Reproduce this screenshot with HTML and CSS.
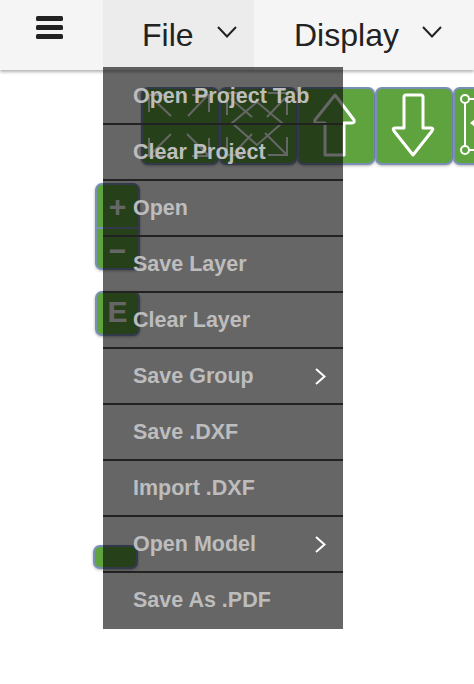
FILE: index.html

```html
<!DOCTYPE html>
<html lang="en">
<head>
  <meta charset="UTF-8" />
  <meta name="viewport" content="width=device-width, initial-scale=1.0" />
  <title>File menu</title>
  <link rel="stylesheet" href="styles.css">
</head>
<body>
  <nav class="topbar">
    <div class="burger">
      <svg width="27" height="23" viewBox="0 0 27 23">
        <rect x="0" y="0" width="27" height="5" rx="1.5" />
        <rect x="0" y="9" width="27" height="5" rx="1.5" />
        <rect x="0" y="18" width="27" height="5" rx="1.5" />
      </svg>
    </div>
    <div class="nav-item nav-file">
      <span>File</span>
      <svg class="caret" width="20" height="12" viewBox="0 0 20 12"><path d="M1 1 L10 10.5 L19 1" /></svg>
    </div>
    <div class="nav-item">
      <span>Display</span>
      <svg class="caret" width="20" height="12" viewBox="0 0 20 12"><path d="M1 1 L10 10.5 L19 1" /></svg>
    </div>
  </nav>

  <!-- floating toolbars, sit on the canvas -->
  <div class="toolbar">
    <button class="tool">
      <svg viewBox="0 0 78 78">
        <path class="thin" d="M8 25 V8 H25 M12 12 L30 29 M68 25 V8 H51 M66 9 L47 29 M8 51 V69 H25 M8 69 L30 47 M68 51 V69 H51 M68 69 L46 47" />
      </svg>
    </button>
    <button class="tool">
      <svg viewBox="0 0 78 78">
        <path class="thin" d="M8 28 V6 H25 M68 28 V6 H49 M8 50 V68 H24 M68 50 V68 H49 M12 12 L33 30 M48 30 L66 11 M16 65 L33 47 M46 46 L68 68 M13 36 L38 15 L63 36 L38 58 Z" />
      </svg>
    </button>
    <button class="tool">
      <svg viewBox="0 0 78 78"><path class="thick" d="M38 8 L18 33 Q17 36 20 36 H28 V68 H47 V36 H55 Q58 36 57 33 Z" /></svg>
    </button>
    <button class="tool">
      <svg viewBox="0 0 78 78"><path class="thick" d="M31 8 H46 Q48 8 48 10 V41 H56 Q59 41 57 44 L38 68 L19 44 Q17 41 20 41 H29 V10 Q29 8 31 8 Z" /></svg>
    </button>
    <button class="tool">
      <svg viewBox="0 0 78 78">
        <path class="thin-white" d="M12 16 V59 M16 12 H62 M16 63 H62" />
        <circle class="handle" cx="12" cy="12" r="4" />
        <circle class="handle" cx="12" cy="63" r="4" />
        <path class="tip" d="M17 36 L23 31 V41 Z" />
      </svg>
    </button>
  </div>

  <div class="side side-zoom">
    <button class="side-btn">+</button>
    <button class="side-btn minus">−</button>
  </div>
  <div class="side side-e">
    <button class="side-btn">E</button>
  </div>
  <div class="side side-small"></div>

  <ul class="dropdown">
    <li>Open Project Tab</li>
    <li>Clear Project</li>
    <li>Open</li>
    <li>Save Layer</li>
    <li>Clear Layer</li>
    <li>Save Group <svg class="more" width="13" height="19" viewBox="0 0 13 19"><path d="M2 2 L10.5 9.5 L2 17" /></svg></li>
    <li>Save .DXF</li>
    <li>Import .DXF</li>
    <li>Open Model <svg class="more" width="13" height="19" viewBox="0 0 13 19"><path d="M2 2 L10.5 9.5 L2 17" /></svg></li>
    <li>Save As .PDF</li>
  </ul>
</body>
</html>
```

FILE: styles.css

```css
html, body {
  height: 100%;
}
body {
  margin: 0;
  background: #fff;
  font-family: "Liberation Sans", Arial, sans-serif;
  color: #222;
  overflow: hidden;
}
button {
  font-family: inherit;
  padding: 0;
  margin: 0;
}

/* top bar */
.topbar {
  display: flex;
  height: 70px;
  background: #f5f5f5;
  box-shadow: 0 2px 3px rgba(0, 0, 0, 0.3);
}
.burger {
  width: 103px;
  box-sizing: border-box;
  padding: 16px 0 0 36px;
}
.burger svg {
  display: block;
  fill: #222;
}
.nav-item {
  display: flex;
  align-items: center;
  gap: 23px;
  flex: none;
  padding-left: 40px;
  font-size: 32px;
}
.nav-file {
  width: 151px;
  box-sizing: border-box;
  padding-left: 39px;
  background: #ececec;
}
.caret {
  margin-top: -6px;
  fill: none;
  stroke: #222;
  stroke-width: 2;
}

/* green tools */
.toolbar {
  position: absolute;
  top: 87px;
  left: 140px;
  right: 0;
  display: flex;
  padding: 0 0 4px 1px;
  overflow: hidden;
}
.tool {
  flex: none;
  width: 78px;
  height: 78px;
  box-sizing: border-box;
  background: #5fa33f;
  border: 2px solid #7a8fb8;
  border-radius: 7px;
  box-shadow: 0 1px 3px rgba(0, 0, 0, 0.3);
  overflow: hidden;
}
.tool svg {
  display: block;
  width: 78px;
  height: 78px;
  margin: -2px;
  fill: none;
}
.thin {
  stroke: #fff;
  stroke-width: 2;
}
.thin-white {
  stroke: #fff;
  stroke-width: 2;
}
.thick {
  stroke: #fff;
  stroke-width: 3;
  stroke-linejoin: round;
}
.handle {
  stroke: #fff;
  stroke-width: 2;
}
.tip {
  fill: #fff;
}

/* small buttons on the left */
.side {
  position: absolute;
  left: 95px;
  width: 45px;
  box-sizing: border-box;
  background: #5fa33f;
  border: 2px solid #7a8fb8;
  border-radius: 7px;
  box-shadow: 0 1px 3px rgba(0, 0, 0, 0.3);
  overflow: hidden;
}
.side-zoom {
  top: 183px;
  height: 87px;
}
.side-e {
  top: 291px;
  height: 45px;
}
.side-small {
  top: 545px;
  left: 93px;
  height: 24px;
}
.side-btn {
  display: block;
  width: 100%;
  height: 42px;
  padding-top: 2px;
  background: none;
  border: 0;
  color: #fff;
  font-size: 30px;
  font-weight: bold;
  line-height: 36px;
}
.side-zoom .minus {
  padding-top: 4px;
  border-top: 2px solid #7a8fb8;
}
.side-e .side-btn {
  padding: 0 0 4px;
}

/* open menu */
.dropdown {
  position: absolute;
  top: 67px;
  left: 103px;
  width: 240px;
  margin: 0;
  padding: 2px 0 0;
  list-style: none;
  background: rgba(0, 0, 0, 0.6);
  color: #bdbdbd;
  font-size: 21.5px;
  font-weight: bold;
}
.dropdown li {
  position: relative;
  display: flex;
  align-items: center;
  height: 54px;
  padding-left: 30px;
  border-bottom: 2px solid #222;
}
.dropdown li:last-child {
  border-bottom-color: transparent;
}
.more {
  position: absolute;
  left: 211px;
  top: 18px;
  fill: none;
  stroke: #fff;
  stroke-width: 2;
}
```
